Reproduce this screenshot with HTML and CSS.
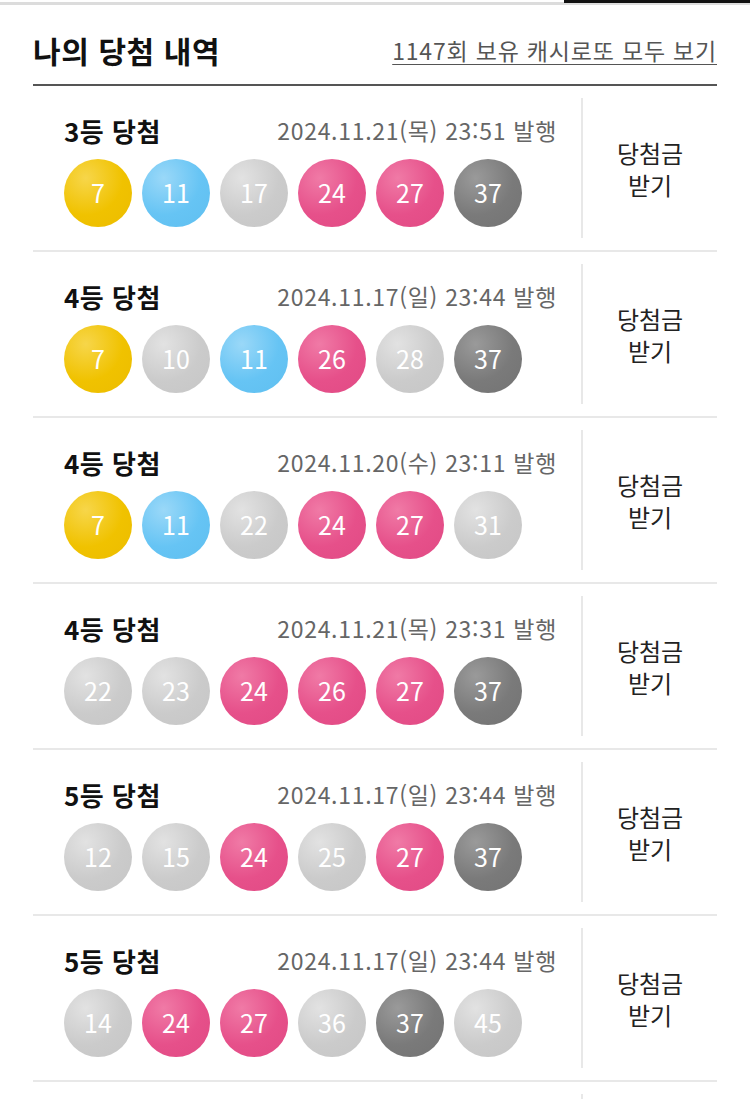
FILE: index.html
```html
<!DOCTYPE html>
<html lang="ko">
<head>
<meta charset="utf-8">
<title>나의 당첨 내역</title>
<link rel="stylesheet" href="styles.css">
</head>
<body>
<div class="topbar"><div class="topbar-active"></div></div>
<section class="section">
  <header class="header">
    <h1 class="title">나의 당첨 내역</h1>
    <a class="more" href="#">1147회 보유 캐시로또 모두 보기</a>
  </header>
  <ul class="list">
    <li class="row">
      <div class="info">
        <div class="meta"><span class="rank">3등 당첨</span><span class="date">2024.11.21(목) 23:51 발행</span></div>
        <div class="balls"><span class="ball y">7</span><span class="ball b">11</span><span class="ball g">17</span><span class="ball p">24</span><span class="ball p">27</span><span class="ball d">37</span></div>
      </div>
      <div class="claim">당첨금<br>받기</div>
    </li>
    <li class="row">
      <div class="info">
        <div class="meta"><span class="rank">4등 당첨</span><span class="date">2024.11.17(일) 23:44 발행</span></div>
        <div class="balls"><span class="ball y">7</span><span class="ball g">10</span><span class="ball b">11</span><span class="ball p">26</span><span class="ball g">28</span><span class="ball d">37</span></div>
      </div>
      <div class="claim">당첨금<br>받기</div>
    </li>
    <li class="row">
      <div class="info">
        <div class="meta"><span class="rank">4등 당첨</span><span class="date">2024.11.20(수) 23:11 발행</span></div>
        <div class="balls"><span class="ball y">7</span><span class="ball b">11</span><span class="ball g">22</span><span class="ball p">24</span><span class="ball p">27</span><span class="ball g">31</span></div>
      </div>
      <div class="claim">당첨금<br>받기</div>
    </li>
    <li class="row">
      <div class="info">
        <div class="meta"><span class="rank">4등 당첨</span><span class="date">2024.11.21(목) 23:31 발행</span></div>
        <div class="balls"><span class="ball g">22</span><span class="ball g">23</span><span class="ball p">24</span><span class="ball p">26</span><span class="ball p">27</span><span class="ball d">37</span></div>
      </div>
      <div class="claim">당첨금<br>받기</div>
    </li>
    <li class="row">
      <div class="info">
        <div class="meta"><span class="rank">5등 당첨</span><span class="date">2024.11.17(일) 23:44 발행</span></div>
        <div class="balls"><span class="ball g">12</span><span class="ball g">15</span><span class="ball p">24</span><span class="ball g">25</span><span class="ball p">27</span><span class="ball d">37</span></div>
      </div>
      <div class="claim">당첨금<br>받기</div>
    </li>
    <li class="row">
      <div class="info">
        <div class="meta"><span class="rank">5등 당첨</span><span class="date">2024.11.17(일) 23:44 발행</span></div>
        <div class="balls"><span class="ball g">14</span><span class="ball p">24</span><span class="ball p">27</span><span class="ball g">36</span><span class="ball d">37</span><span class="ball g">45</span></div>
      </div>
      <div class="claim">당첨금<br>받기</div>
    </li>
    <li class="row">
      <div class="info">
        <div class="meta"><span class="rank">5등 당첨</span><span class="date">2024.11.17(일) 23:44 발행</span></div>
        <div class="balls"><span class="ball g">14</span><span class="ball p">24</span><span class="ball p">27</span><span class="ball g">36</span><span class="ball d">37</span><span class="ball g">45</span></div>
      </div>
      <div class="claim">당첨금<br>받기</div>
    </li>
  </ul>
</section>
</body>
</html>
```

FILE: styles.css
```css
* { box-sizing: border-box; }
html, body { margin: 0; padding: 0; background: #fff; }
body {
  font-family: "Noto Sans CJK KR", "Noto Sans", sans-serif;
  color: #111;
  height: 1099px;
  overflow: hidden;
}
.topbar {
  height: 3px;
  margin-top: 2px;
  background: #dcdcdc;
  display: flex;
  justify-content: flex-end;
}
.topbar-active {
  width: 186px;
  height: 3px;
  margin-top: -2px;
  background: #111;
}
.section { margin: 0 33px; }
.header {
  display: flex;
  justify-content: space-between;
  align-items: center;
  padding: 25px 0 14px;
  border-bottom: 2px solid #555;
}
.title {
  margin: 0;
  font-size: 30px;
  line-height: 40px;
  font-weight: 700;
  color: #111;
  letter-spacing: 0.6px;
}
.more {
  font-size: 23px;
  line-height: 40px;
  color: #555;
  text-decoration: underline;
  text-underline-offset: 4px;
  text-decoration-thickness: 1px;
  letter-spacing: 0.8px;
}
.list { list-style: none; margin: 0; padding: 0; }
.row {
  display: flex;
  border-bottom: 2px solid #e8e8e8;
}
.info {
  flex: 1;
  padding: 26px 24px 23px 31px;
}
.meta {
  display: flex;
  justify-content: space-between;
  align-items: center;
  height: 36px;
}
.rank {
  font-size: 26px;
  font-weight: 700;
  color: #111;
  letter-spacing: 0.5px;
}
.date {
  font-size: 23px;
  color: #666;
  letter-spacing: 0.7px;
}
.balls {
  display: flex;
  gap: 10px;
  margin-top: 11px;
}
.ball {
  width: 68px;
  height: 68px;
  border-radius: 50%;
  display: flex;
  align-items: center;
  justify-content: center;
  color: #fff;
  font-size: 25px;
  line-height: 1;
  padding-bottom: 2px;
}
.ball.y { background: radial-gradient(circle at 32% 28%, #f7d64a 0%, #f0c200 55%, #ecbc00 100%); }
.ball.b { background: radial-gradient(circle at 32% 28%, #9ad8f8 0%, #66c4f4 55%, #5fbff0 100%); }
.ball.g { background: radial-gradient(circle at 32% 28%, #e2e2e2 0%, #cbcbcb 55%, #c6c6c6 100%); }
.ball.p { background: radial-gradient(circle at 32% 28%, #f07aa6 0%, #e6508a 55%, #e14a84 100%); }
.ball.d { background: radial-gradient(circle at 32% 28%, #9a9a9a 0%, #7a7a7a 55%, #737373 100%); }
.claim {
  width: 136px;
  margin: 12px 0 12px;
  border-left: 2px solid #e8e8e8;
  display: flex;
  align-items: center;
  justify-content: center;
  text-align: center;
  font-size: 24px;
  line-height: 32px;
  color: #222;
  padding-top: 2px;
}
```
